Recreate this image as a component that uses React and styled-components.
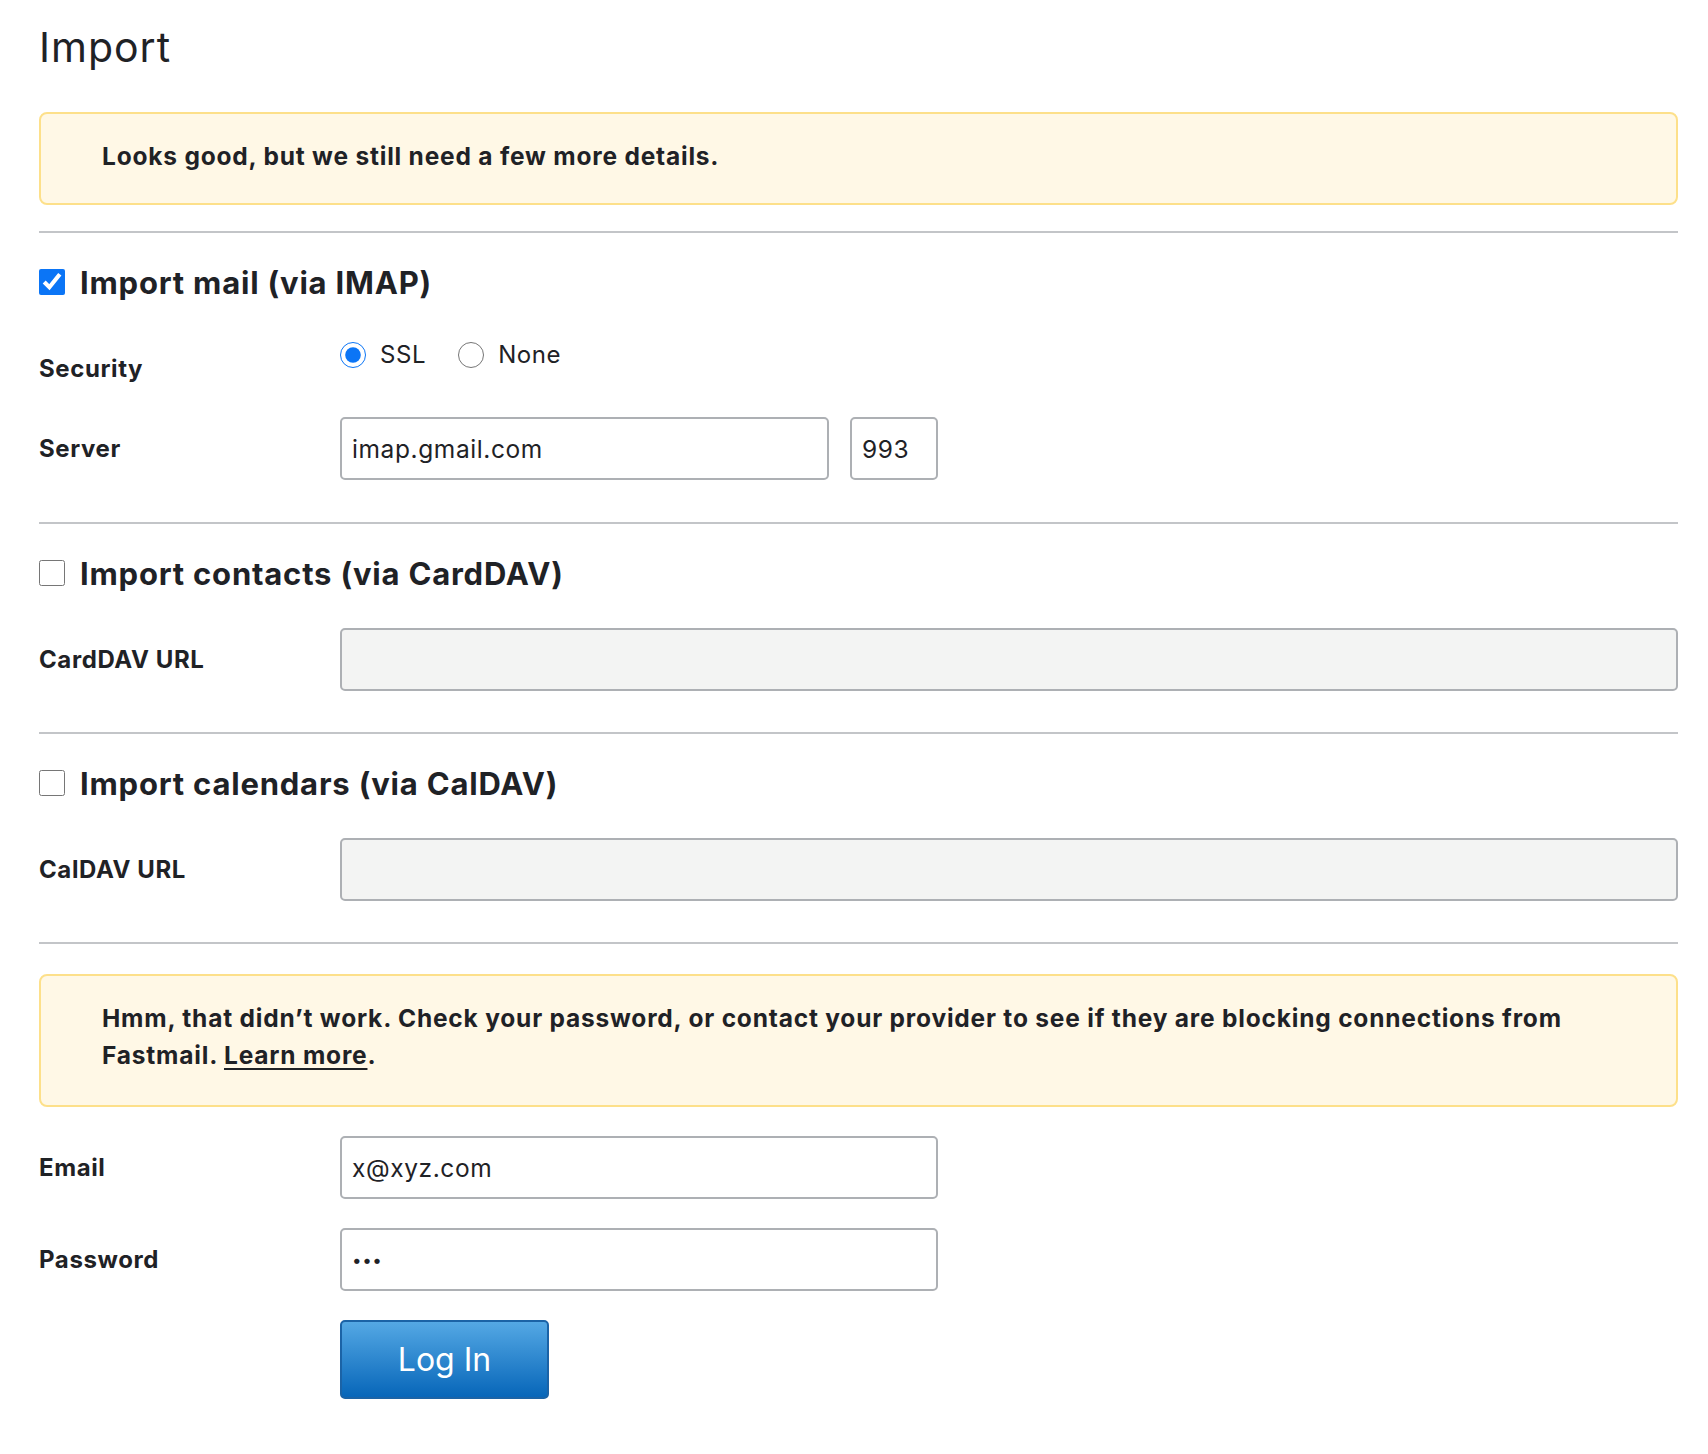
import React from 'react';
import styled, { createGlobalStyle } from 'styled-components';

const GlobalStyle = createGlobalStyle`
  body {
    margin: 0;
    background: #ffffff;
    font-family: Inter, "Noto Sans", sans-serif;
    color: #1f2226;
  }
  * { box-sizing: border-box; }
`;

const Page = styled.main`
  padding: 22px 30px 60px 39px;
`;

const Title = styled.h1`
  margin: 0 0 40px;
  font-size: 41px;
  font-weight: 400;
  letter-spacing: 1px;
  line-height: 50px;
`;

const Notice = styled.div`
  border: 2px solid #fde08a;
  background: #fff8e6;
  border-radius: 8px;
  padding: 24px 61px ${(p) => (p.$tall ? 31 : 28)}px;
  font-size: 24.5px;
  font-weight: 700;
  letter-spacing: 0.8px;
  line-height: 37px;
  margin-top: ${(p) => p.$top || 0}px;

  a {
    color: inherit;
    text-decoration: underline;
    text-underline-offset: 4px;
    text-decoration-thickness: 2px;
  }
`;

const Divider = styled.hr`
  border: 0;
  height: 2px;
  background: #c3c5c8;
  margin: ${(p) => p.$top}px 0 0;
`;

const Section = styled.section`
  padding-top: 29px;
`;

const Heading = styled.label`
  display: flex;
  align-items: center;
  gap: 15px;
  height: 40px;
  font-size: 31px;
  font-weight: 700;
  letter-spacing: 0.8px;

  input {
    width: 26px;
    height: 26px;
    margin: 0;
    accent-color: #0b75f6;
  }
`;

const Fields = styled.div`
  display: grid;
  grid-template-columns: 301px 1fr;
  row-gap: ${(p) => p.$gap}px;
  margin-top: ${(p) => p.$top}px;
`;

const Label = styled.div`
  font-size: 24px;
  font-weight: 700;
  letter-spacing: 0.6px;
  line-height: 63px;
`;

const Control = styled.div`
  display: flex;
  gap: 21px;
  min-height: 63px;
`;

const RadioGroup = styled.div`
  display: flex;
  align-items: center;
  height: 35px;
  gap: 32px;
`;

const Radio = styled.label`
  display: flex;
  align-items: center;
  gap: 14px;
  font-size: 24px;
  letter-spacing: 0.6px;

  input {
    width: 26px;
    height: 26px;
    margin: 0;
    accent-color: #0b75f6;
  }
`;

const Input = styled.input`
  width: ${(p) => p.$w || '100%'};
  height: 63px;
  border: 2px solid #adb0b4;
  border-radius: 5px;
  padding: 0 10px;
  font-family: Inter, "Noto Sans", sans-serif;
  font-size: ${(p) => (p.type === 'password' ? 17 : 24.5)}px;
  letter-spacing: 0.6px;
  color: #1f2226;
  background: ${(p) => (p.disabled ? '#f3f4f3' : '#ffffff')};
  outline: none;
`;

const Button = styled.button`
  width: 209px;
  height: 79px;
  border: 2px solid #1b63a6;
  border-radius: 5px;
  background: linear-gradient(#54a8e4, #0766b9);
  color: #ffffff;
  font-family: Inter, "Noto Sans", sans-serif;
  font-size: 32px;
  font-weight: 400;
`;

export default function App() {
  return (
    <Page>
      <GlobalStyle />
      <Title>Import</Title>
      <Notice>Looks good, but we still need a few more details.</Notice>

      <Divider $top={26} />
      <Section>
        <Heading>
          <input type="checkbox" defaultChecked />
          Import mail (via IMAP)
        </Heading>
        <Fields $top={35} $gap={17}>
          <Label>Security</Label>
          <Control>
            <RadioGroup>
              <Radio>
                <input type="radio" name="sec" defaultChecked />
                SSL
              </Radio>
              <Radio>
                <input type="radio" name="sec" />
                None
              </Radio>
            </RadioGroup>
          </Control>
          <Label>Server</Label>
          <Control>
            <Input $w="489px" defaultValue="imap.gmail.com" />
            <Input $w="88px" defaultValue="993" />
          </Control>
        </Fields>
      </Section>

      <Divider $top={42} />
      <Section>
        <Heading>
          <input type="checkbox" />
          Import contacts (via CardDAV)
        </Heading>
        <Fields $top={35} $gap={17}>
          <Label>CardDAV URL</Label>
          <Control>
            <Input disabled />
          </Control>
        </Fields>
      </Section>

      <Divider $top={41} />
      <Section>
        <Heading>
          <input type="checkbox" />
          Import calendars (via CalDAV)
        </Heading>
        <Fields $top={35} $gap={17}>
          <Label>CalDAV URL</Label>
          <Control>
            <Input disabled />
          </Control>
        </Fields>
      </Section>

      <Divider $top={41} />
      <Notice $top={30} $tall>
        Hmm, that didn’t work. Check your password, or contact your provider to see if they are
        blocking connections from Fastmail. <a href="#">Learn more</a>.
      </Notice>

      <Fields $top={29} $gap={29}>
        <Label>Email</Label>
        <Control>
          <Input $w="598px" defaultValue="x@xyz.com" />
        </Control>
        <Label>Password</Label>
        <Control>
          <Input $w="598px" type="password" defaultValue="abc" />
        </Control>
        <div />
        <Control>
          <Button>Log In</Button>
        </Control>
      </Fields>
    </Page>
  );
}
